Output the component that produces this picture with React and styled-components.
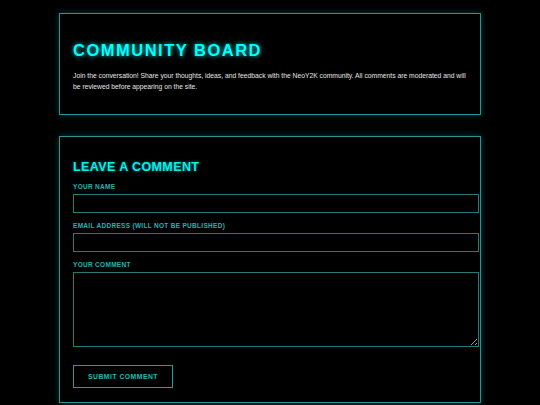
import React from 'react'
import styled, { createGlobalStyle } from "styled-components";

const GlobalStyle = createGlobalStyle`
  html, body {
    margin: 0;
    padding: 0;
    background: #000;
  }
  body {
    font-family: "Liberation Sans", Arial, sans-serif;
    color: #e6e6e6;
  }
`;

const Page = styled.div`
  max-width: 422px;
  margin: 0 auto;
  padding: 13px 0 20px;
  display: flex;
  flex-direction: column;
  gap: 21px;
`;

const Card = styled.section`
  border: 1px solid #2a9595;
  box-shadow: 0 0 6px rgba(0, 255, 255, 0.25);
  background: #000;
  padding: 13.5px 13px;
`;

const Title = styled.h1`
  margin: 13.5px 0 10px;
  font-size: 16.5px;
  font-weight: bold;
  letter-spacing: 1.5px;
  color: #00ffff;
  text-shadow: 0 0 5px rgba(0, 255, 255, 0.8);
  line-height: 19px;
`;

const Intro = styled.p`
  margin: 0 0 8px;
  font-size: 6.75px;
  line-height: 11px;
  color: #e6e6e6;
`;

const SubTitle = styled.h2`
  margin: 10px 0 9px;
  font-size: 12.5px;
  font-weight: bold;
  letter-spacing: 0.4px;
  color: #00f0f0;
  text-shadow: 0 0 3px rgba(0, 255, 255, 0.5);
  line-height: 14px;
`;

const Field = styled.div`
  margin-bottom: 9px;
`;

const Label = styled.label`
  display: block;
  font-size: 6.5px;
  font-weight: bold;
  line-height: 8px;
  letter-spacing: 0.3px;
  color: #1fb4b4;
  margin-bottom: 3px;
`;

const Input = styled.input`
  display: block;
  box-sizing: content-box;
  width: 100%;
  height: 17px;
  padding: 0 5px;
  margin: 0;
  border: 1px solid #287a7a;
  background: #000;
  color: #e6e6e6;
  font-family: inherit;
  outline: none;
`;

const TextArea = styled.textarea`
  display: block;
  box-sizing: content-box;
  width: 100%;
  height: 73px;
  padding: 0 5px;
  margin: 0 0 18px;
  border: 1px solid #287a7a;
  background: #000;
  color: #e6e6e6;
  font-family: inherit;
  resize: vertical;
  outline: none;
`;

const Button = styled.button`
  display: block;
  width: 100px;
  height: 23px;
  padding: 0;
  background: #000;
  border: 1px solid #2a9a9a;
  color: #1fbcbc;
  font-family: "Liberation Sans", Arial, sans-serif;
  font-size: 6.8px;
  font-weight: bold;
  letter-spacing: 0.5px;
  cursor: pointer;
`;

const App = () => {
  return (
    <>
      <GlobalStyle />
      <Page>
        <Card>
          <Title>COMMUNITY BOARD</Title>
          <Intro>
            Join the conversation! Share your thoughts, ideas, and feedback with the NeoY2K community. All comments are moderated and will be reviewed before appearing on the site.
          </Intro>
        </Card>

        <Card>
          <SubTitle>LEAVE A COMMENT</SubTitle>
          <Field>
            <Label htmlFor="name">YOUR NAME</Label>
            <Input id="name" type="text" />
          </Field>
          <Field>
            <Label htmlFor="email">EMAIL ADDRESS (WILL NOT BE PUBLISHED)</Label>
            <Input id="email" type="email" />
          </Field>
          <Field>
            <Label htmlFor="comment">YOUR COMMENT</Label>
            <TextArea id="comment" />
          </Field>
          <Button>SUBMIT COMMENT</Button>
        </Card>
      </Page>
    </>
  )
}

export default App
